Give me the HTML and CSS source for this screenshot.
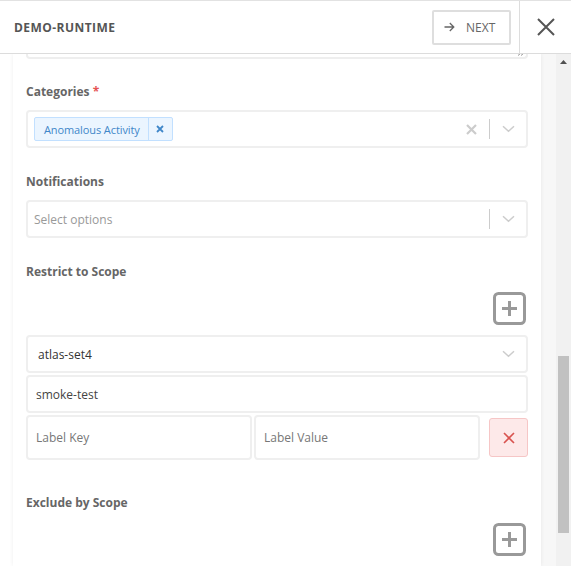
FILE: index.html
```html
<!DOCTYPE html>
<html>
<head>
<meta charset="utf-8">
<link rel="stylesheet" href="styles.css">
</head>
<body>
<div class="app">
  <header class="topbar">
    <div class="title">DEMO-RUNTIME</div>
    <div class="next-wrap">
      <button class="next-btn">
        <svg width="11" height="10" viewBox="0 0 11 10"><path d="M0.5 5h9.5M5.8 1l4 4-4 4" fill="none" stroke="#666" stroke-width="1.3"/></svg>
        <span>NEXT</span>
      </button>
    </div>
    <button class="close-btn">
      <svg width="18" height="18" viewBox="0 0 18 18"><path d="M1 1L17 17M17 1L1 17" stroke="#555" stroke-width="2" fill="none"/></svg>
    </button>
  </header>
  <div class="body">
    <div class="viewport">
      <div class="panel">
        <div class="textarea-tail">
          <svg class="resize" width="8" height="6" viewBox="0 0 8 6"><path d="M1 5.5L7 0.5M4 5.5L7 3" stroke="#888" stroke-width="0.9" fill="none"/></svg>
        </div>

        <section class="field first">
          <div class="label">Categories <span class="req">*</span></div>
          <div class="select">
            <div class="value-area">
              <div class="tag">
                <span class="tag-label">Anomalous Activity</span>
                <span class="tag-remove"><svg width="8" height="8" viewBox="0 0 8 8"><path d="M1 1l6 6M7 1l-6 6" stroke="#3f87c9" stroke-width="1.8"/></svg></span>
              </div>
            </div>
            <div class="indicators">
              <span class="ind"><svg width="11" height="11" viewBox="0 0 11 11"><path d="M1 1l9 9M10 1l-9 9" stroke="#cccccc" stroke-width="2.2"/></svg></span>
              <span class="sep"></span>
              <span class="ind"><svg width="13" height="8" viewBox="0 0 13 8"><path d="M1 1.2l5.5 5 5.5-5" stroke="#cccccc" stroke-width="1.5" fill="none"/></svg></span>
            </div>
          </div>
        </section>

        <section class="field">
          <div class="label">Notifications</div>
          <div class="select">
            <div class="value-area"><span class="placeholder">Select options</span></div>
            <div class="indicators">
              <span class="sep"></span>
              <span class="ind"><svg width="13" height="8" viewBox="0 0 13 8"><path d="M1 1.2l5.5 5 5.5-5" stroke="#cccccc" stroke-width="1.5" fill="none"/></svg></span>
            </div>
          </div>
        </section>

        <section class="field scope">
          <div class="label">Restrict to Scope</div>
          <div class="add-row">
            <span class="add-btn"><svg width="33" height="33" viewBox="0 0 33 33"><rect x="1.5" y="1.5" width="30" height="30" rx="4" fill="none" stroke="#999" stroke-width="3"/><path d="M16.5 9v15M9 16.5h15" stroke="#999" stroke-width="3"/></svg></span>
          </div>
          <div class="select single">
            <div class="value-area"><span class="single-value">atlas-set4</span></div>
            <div class="indicators">
              <span class="ind"><svg width="13" height="8" viewBox="0 0 13 8"><path d="M1 1.2l5.5 5 5.5-5" stroke="#cccccc" stroke-width="1.5" fill="none"/></svg></span>
            </div>
          </div>
          <div class="input text">smoke-test</div>
          <div class="label-row">
            <div class="input ph">Label Key</div>
            <div class="input ph">Label Value</div>
            <button class="del-btn"><svg width="12" height="12" viewBox="0 0 12 12"><path d="M1 1l10 10M11 1L1 11" stroke="#d9534f" stroke-width="1.6"/></svg></button>
          </div>
        </section>

        <section class="field scope">
          <div class="label">Exclude by Scope</div>
          <div class="add-row">
            <span class="add-btn"><svg width="33" height="33" viewBox="0 0 33 33"><rect x="1.5" y="1.5" width="30" height="30" rx="4" fill="none" stroke="#999" stroke-width="3"/><path d="M16.5 9v15M9 16.5h15" stroke="#999" stroke-width="3"/></svg></span>
          </div>
        </section>
      </div>
      <div class="gutter"></div>
    </div>
    <div class="scrollbar">
      <div class="sb-btn"><svg width="7" height="4" viewBox="0 0 7 4"><path d="M0 4L3.5 0 7 4z" fill="#505050"/></svg></div>
      <div class="sb-track"><div class="sb-thumb"></div></div>
    </div>
  </div>
</div>
</body>
</html>
```
FILE: styles.css
```css
* { box-sizing: border-box; }
html, body { margin: 0; padding: 0; }
body {
  font-family: "Open Sans", "Liberation Sans", sans-serif;
  background: #fff;
  width: 571px;
  height: 566px;
  overflow: hidden;
}
.app { display: flex; flex-direction: column; height: 566px; }

.topbar {
  display: flex;
  height: 54px;
  flex: none;
  border-top: 1px solid #e2e2e2;
  border-bottom: 1px solid #dcdcdc;
  background: #fff;
}
.title {
  flex: 1;
  display: flex;
  align-items: center;
  padding-left: 14px;
  font-size: 12px;
  font-weight: 700;
  color: #555;
  letter-spacing: 0.45px;
}
.next-wrap { display: flex; align-items: center; padding-right: 8px; }
.next-btn {
  width: 79px;
  height: 35px;
  border: 2px solid #dedede;
  border-radius: 2px;
  background: #fff;
  display: flex;
  align-items: center;
  gap: 11px;
  padding: 0 0 0 10px;
  font-family: "Open Sans", sans-serif;
  font-size: 12px;
  color: #666;
}
.close-btn {
  width: 52px;
  border: 0;
  border-left: 1px solid #ddd;
  background: #fff;
  display: flex;
  align-items: center;
  justify-content: center;
  padding: 0;
}

.body { display: flex; flex: 1; height: 512px; overflow: hidden; }
.viewport { flex: 1; display: flex; background: #fff; padding-left: 13px; }
.panel {
  width: 528px;
  flex: none;
  background: #fff;
  padding: 0 13px;
  box-shadow: 0 0 4px rgba(0, 0, 0, 0.07);
  position: relative;
  z-index: 1;
}
.gutter { flex: 1; background: #f7f7f7; }

.textarea-tail {
  position: relative;
  height: 5px;
  border: 2px solid #eeeeee;
  border-top: 0;
  border-radius: 0 0 4px 4px;
}
.resize { position: absolute; right: 1px; bottom: 1px; }

.field { margin-top: 24px; }
.field.first { margin-top: 23px; }
.label {
  font-size: 12px;
  line-height: 18px;
  padding-top: 1px;
  font-weight: 700;
  color: #666;
  margin-bottom: 9px;
}
.req { color: #e55353; }

.select {
  height: 38px;
  border: 2px solid #efefef;
  border-radius: 4px;
  display: flex;
  align-items: center;
  background: #fff;
}
.value-area { flex: 1; display: flex; align-items: center; padding-left: 6px; }
.tag {
  display: flex;
  height: 24px;
  border: 1px solid #c2e0ff;
  border-radius: 2px;
  background: #ebf5ff;
  color: #3f87c9;
  font-size: 11px;
}
.tag-label { display: flex; align-items: center; padding: 0 8px 0 9px; letter-spacing: -0.1px; }
.tag-remove {
  width: 24px;
  display: flex;
  align-items: center;
  justify-content: center;
  border-left: 1px solid #c2e0ff;
}
.placeholder { font-size: 12px; color: #999; }
.single-value { font-size: 12px; color: #333; padding-left: 4px; }
.indicators { display: flex; align-items: center; height: 100%; }
.ind { width: 36px; display: flex; align-items: center; justify-content: center; }
.sep { width: 1px; height: 20px; background: #cccccc; }

.add-row { display: flex; justify-content: flex-end; margin-top: 11px; margin-bottom: 10px; padding-right: 2px; }
.add-btn { display: block; width: 33px; height: 33px; }
.add-btn svg { display: block; }

.input {
  border: 2px solid #efefef;
  border-radius: 4px;
  display: flex;
  align-items: center;
  padding-left: 8px;
  font-size: 12px;
  background: #fff;
}
.text { height: 38px; margin-top: 2px; color: #444; }
.select.single { height: 38px; }
.label-row { display: flex; align-items: center; gap: 2px; margin-top: 2px; }
.label-row .input { flex: 1; height: 45px; color: #777; }
.del-btn {
  width: 39px;
  height: 39px;
  margin-left: 7px;
  border: 1px solid #f6c6c6;
  border-radius: 3px;
  background: #fde9e9;
  display: flex;
  align-items: center;
  justify-content: center;
  padding: 0;
}
.scope + .scope { margin-top: 33px; }

.scrollbar { width: 15px; flex: none; background: #f1f1f1; display: flex; flex-direction: column; }
.sb-btn { height: 15px; display: flex; align-items: center; justify-content: center; }
.sb-track { flex: 1; padding-top: 287px; }
.sb-thumb { margin: 0 2px; height: 177px; background: #c1c1c1; }
```
